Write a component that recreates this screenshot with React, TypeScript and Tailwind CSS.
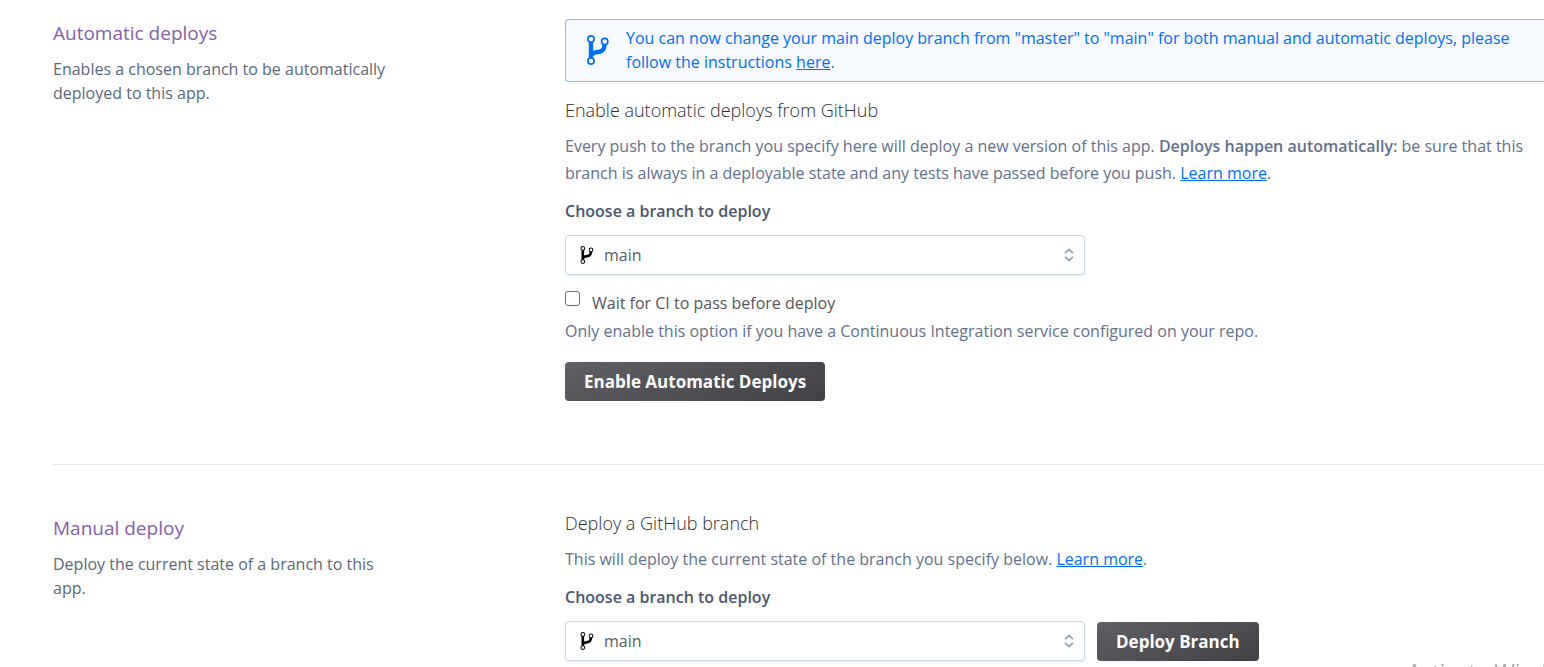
import type { ReactNode } from 'react';

function BranchIcon({ className }: { className: string }) {
  return (
    <svg viewBox="0 0 22 30" fill="none" stroke="currentColor" className={className} aria-hidden="true">
      <path d="M4 7v16" strokeWidth="4.400" />
      <path d="M17.500 9.500c0 6-3 7.500-8 7.700-3.500.2-4.500 1.300-5.200 3" strokeWidth="4.400" />
      <circle cx="4" cy="4" r="3.100" strokeWidth="1.700" fill="white" />
      <circle cx="4" cy="26" r="3.100" strokeWidth="1.700" fill="white" />
      <circle cx="17.700" cy="6.500" r="3.100" strokeWidth="1.700" fill="white" />
    </svg>
  );
}

function BranchSelect({ id }: { id: string }) {
  return (
    <div className="relative w-[520px]">
      <select
        id={id}
        defaultValue="main"
        className="block h-10 w-full appearance-none rounded border border-[#cfd7e6] bg-white pl-[38px] pr-8 text-base text-[#5a5a5f] shadow-[0_1px_2px_rgba(207,215,230,0.5)]"
      >
        <option value="main">main</option>
      </select>
      <BranchIcon className="pointer-events-none absolute left-[15px] top-[11px] h-[18px] w-[14px] text-black" />
      <svg
        viewBox="0 0 10 14"
        fill="none"
        stroke="#96a3b6"
        strokeWidth="1.800"
        className="pointer-events-none absolute right-[11px] top-[13px] h-[14px] w-[10px]"
        aria-hidden="true"
      >
        <path d="M1 5.200l4-3.700 4 3.700M1 8.800l4 3.700 4-3.700" />
      </svg>
    </div>
  );
}

function DarkButton({ children }: { children: ReactNode }) {
  return (
    <button
      type="button"
      className="h-[39px] whitespace-nowrap rounded bg-linear-160 from-[#606065] to-[#414045] px-[19px] text-[17px] font-bold text-white"
    >
      {children}
    </button>
  );
}

function Aside({ title, children }: { title: string; children: ReactNode }) {
  return (
    <div className="w-[345px] shrink-0">
      <h2 className="text-[19px] leading-6 text-[#8260a8]">{title}</h2>
      <p className="mt-3 leading-6 text-[#5a6878]">{children}</p>
    </div>
  );
}

const linkClass = 'text-[#0070f0] underline';

export default function App() {
  return (
    <div className="overflow-x-hidden bg-white pb-1.5 pl-[53px] font-['Open_Sans',sans-serif] text-base">
      <section className="flex gap-[167px] border-b border-[#e8e8ee] pb-[63px] pt-[19px]">
        <div className="pt-0.5">
          <Aside title="Automatic deploys">Enables a chosen branch to be automatically deployed to this app.</Aside>
        </div>
        <div className="min-w-0 flex-1">
          <div className="flex items-center gap-[17px] rounded-l border border-r-0 border-[#8bbcf0] bg-[#f6f9fe] pb-[7px] pl-[21px] pr-5 pt-1.5 text-[#0070f0]">
            <BranchIcon className="h-[30px] w-[22px] shrink-0" />
            <p className="leading-6">
              You can now change your main deploy branch from "master" to "main" for both manual and automatic deploys,
              please follow the instructions <a href="#instructions" className={linkClass}>here</a>.
            </p>
          </div>
          <h3 className="mt-4 text-lg font-light leading-6 text-[#2c2c30]">Enable automatic deploys from GitHub</h3>
          <p className="mt-[11px] leading-[27px] text-[#62708a]">
            Every push to the branch you specify here will deploy a new version of this app.{' '}
            <strong className="font-semibold">Deploys happen automatically:</strong> be sure that this branch is always
            in a deployable state and any tests have passed before you push.{' '}
            <a href="#automatic" className={linkClass}>Learn more</a>.
          </p>
          <label htmlFor="auto-branch" className="mb-3 mt-3 block font-semibold leading-6 text-[#4a566b]">
            Choose a branch to deploy
          </label>
          <BranchSelect id="auto-branch" />
          <div className="mt-4 flex items-start gap-3">
            <input
              id="ci"
              type="checkbox"
              className="size-[15px] appearance-none rounded-[3px] border border-[#6b6b70] bg-white"
            />
            <label htmlFor="ci" className="leading-6 text-[#55555a]">Wait for CI to pass before deploy</label>
          </div>
          <p className="mb-[19px] mt-1 leading-6 text-[#62708a]">
            Only enable this option if you have a Continuous Integration service configured on your repo.
          </p>
          <DarkButton>Enable Automatic Deploys</DarkButton>
        </div>
      </section>

      <section className="flex gap-[167px] pt-[46px]">
        <div className="pt-[5px]">
          <Aside title="Manual deploy">Deploy the current state of a branch to this app.</Aside>
        </div>
        <div className="min-w-0 flex-1">
          <h3 className="text-lg font-light leading-6 text-[#2c2c30]">Deploy a GitHub branch</h3>
          <p className="mt-[11px] leading-[27px] text-[#62708a]">
            This will deploy the current state of the branch you specify below.{' '}
            <a href="#manual" className={linkClass}>Learn more</a>.
          </p>
          <label htmlFor="manual-branch" className="mb-3 mt-3 block font-semibold leading-6 text-[#4a566b]">
            Choose a branch to deploy
          </label>
          <div className="flex items-end gap-3">
            <BranchSelect id="manual-branch" />
            <DarkButton>Deploy Branch</DarkButton>
          </div>
        </div>
      </section>

      <div className="pointer-events-none fixed inset-x-0 bottom-0 flex h-2 justify-end overflow-hidden">
        <span className="-mr-11 whitespace-nowrap text-[22px] leading-6 text-[#a8a8a8]">Activate Windows</span>
      </div>
    </div>
  );
}
